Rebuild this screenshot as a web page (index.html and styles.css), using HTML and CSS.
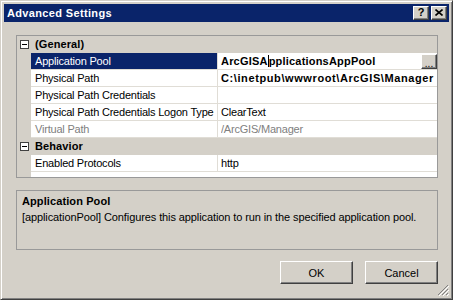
FILE: index.html
```html
<!DOCTYPE html>
<html lang="en">
<head>
  <meta charset="UTF-8" />
  <title>Advanced Settings</title>
  <link rel="stylesheet" href="styles.css">
</head>
<body>
  <div class="window">
    <div class="titlebar">
      <span class="title">Advanced Settings</span>
      <div class="caption-btns">
        <span class="cbtn">?</span>
        <span class="cbtn">
          <svg width="8" height="7" viewBox="0 0 8 7"><path d="M0.5 0.5 L7.5 6.5 M7.5 0.5 L0.5 6.5" stroke="#000" stroke-width="1.6"/></svg>
        </span>
      </div>
    </div>

    <div class="content">
      <!-- property grid -->
      <div class="grid">
        <div class="row cat">
          <span class="margin"><i class="toggle"></i></span>
          <span class="cat-name">(General)</span>
        </div>
        <div class="row selected">
          <span class="margin"></span>
          <span class="name">Application Pool</span>
          <span class="value strong">
            <span class="value-text">ArcGISA<i class="caret"></i>pplicationsAppPool</span>
            <span class="ellipsis">...</span>
          </span>
        </div>
        <div class="row">
          <span class="margin"></span>
          <span class="name">Physical Path</span>
          <span class="value strong"><span class="value-text path">C:\inetpub\wwwroot\ArcGIS\Manager</span></span>
        </div>
        <div class="row">
          <span class="margin"></span>
          <span class="name">Physical Path Credentials</span>
          <span class="value"><span class="value-text"></span></span>
        </div>
        <div class="row">
          <span class="margin"></span>
          <span class="name">Physical Path Credentials Logon Type</span>
          <span class="value"><span class="value-text">ClearText</span></span>
        </div>
        <div class="row readonly">
          <span class="margin"></span>
          <span class="name">Virtual Path</span>
          <span class="value"><span class="value-text">/ArcGIS/Manager</span></span>
        </div>
        <div class="row cat">
          <span class="margin"><i class="toggle"></i></span>
          <span class="cat-name">Behavior</span>
        </div>
        <div class="row">
          <span class="margin"></span>
          <span class="name">Enabled Protocols</span>
          <span class="value"><span class="value-text">http</span></span>
        </div>
      </div>

      <!-- description panel -->
      <div class="desc">
        <div class="desc-title">Application Pool</div>
        <div class="desc-text">[applicationPool] Configures this application to run in the specified application pool.</div>
      </div>

      <div class="buttons">
        <button class="btn">OK</button>
        <button class="btn">Cancel</button>
      </div>
    </div>

    <svg class="grip" width="12" height="12" viewBox="0 0 12 12">
      <path d="M11 1 L1 11 M11 5 L5 11 M11 9 L9 11" stroke="#808080" stroke-width="1"/>
      <path d="M12 2 L2 12 M12 6 L6 12 M12 10 L10 12" stroke="#fff" stroke-width="1"/>
    </svg>
  </div>
</body>
</html>
```

FILE: styles.css
```css
* {
  box-sizing: border-box;
}

body {
  margin: 0;
  background-color: #d4d0c8;
  font-family: "Liberation Sans", Arial, sans-serif;
  font-size: 11px;
  color: #000;
}

.window {
  position: relative;
  width: 453px;
  height: 300px;
  display: flex;
  flex-direction: column;
  padding: 3px;
  border: 1px solid;
  border-color: #d4d0c8 #404040 #404040 #d4d0c8;
  box-shadow: inset 1px 1px #fff, inset -1px -1px #808080;
  background-color: #d4d0c8;
}

.titlebar {
  height: 18px;
  display: flex;
  align-items: center;
  padding-left: 3px;
  background-color: #0a246a;
  color: #fff;
}

.title {
  font-weight: bold;
  letter-spacing: 0.35px;
}

.caption-btns {
  margin-left: auto;
  display: flex;
  gap: 2px;
  padding-right: 2px;
}

.cbtn {
  width: 16px;
  height: 14px;
  display: flex;
  align-items: center;
  justify-content: center;
  background-color: #d4d0c8;
  border: 1px solid;
  border-color: #fff #404040 #404040 #fff;
  box-shadow: inset -1px -1px #808080;
  color: #000;
  font-weight: bold;
  font-size: 11px;
  line-height: 1;
  padding-bottom: 1px;
}

.content {
  flex: 1;
  display: flex;
  flex-direction: column;
  padding: 13px 11px 0 12px;
}

/* property grid */
.grid {
  height: 143px;
  display: flex;
  flex-direction: column;
  border: 1px solid #999;
  background: linear-gradient(to right, #d4d0c8 14px, #fff 14px);
  overflow: hidden;
  letter-spacing: -0.2px;
}

.row {
  display: flex;
  height: 17px;
  line-height: 16px;
  white-space: nowrap;
}

.margin {
  flex: none;
  width: 14px;
  display: flex;
  align-items: center;
  padding-left: 3px;
}

.toggle {
  width: 9px;
  height: 9px;
  border: 1px solid #404040;
  background-color: #fff;
  position: relative;
}

.toggle::after {
  content: "";
  position: absolute;
  left: 1px;
  top: 3px;
  width: 5px;
  height: 1px;
  background-color: #000;
}

.name {
  flex: none;
  width: 187px;
  padding-left: 4px;
  border-right: 1px solid #e0ddd6;
  border-bottom: 1px solid #e0ddd6;
  overflow: hidden;
}

.value {
  flex: 1;
  min-width: 0;
  display: flex;
  padding-left: 3px;
  border-bottom: 1px solid #e0ddd6;
}

.value-text {
  flex: 1;
  overflow: hidden;
}

.strong {
  font-weight: bold;
  letter-spacing: 0.2px;
}

.path {
  letter-spacing: 0.6px;
}

.cat {
  background-color: #d4d0c8;
}

.cat-name {
  padding-left: 4px;
  font-weight: bold;
  letter-spacing: 0.1px;
}

.selected .name {
  background-color: #0a246a;
  color: #fff;
}

.readonly .name,
.readonly .value {
  color: #808080;
}

.caret {
  display: inline-block;
  width: 1px;
  height: 12px;
  background-color: #000;
  vertical-align: -2px;
}

.ellipsis {
  flex: none;
  width: 16px;
  height: 15px;
  margin-top: 1px;
  display: flex;
  align-items: flex-end;
  justify-content: center;
  background-color: #d4d0c8;
  border: 1px solid;
  border-color: #fff #404040 #404040 #fff;
  box-shadow: inset -1px -1px #808080;
  font-size: 10px;
  font-weight: normal;
  line-height: 9px;
  letter-spacing: 0;
}

/* description */
.desc {
  margin-top: 12px;
  height: 60px;
  padding: 2px 5px;
  border: 1px solid #999;
  line-height: 16px;
  letter-spacing: -0.1px;
}

.desc-title {
  font-weight: bold;
  letter-spacing: 0.1px;
}

.buttons {
  margin-top: 11px;
  display: flex;
  justify-content: flex-end;
  gap: 12px;
}

.btn {
  width: 73px;
  height: 23px;
  padding: 0;
  background-color: #d4d0c8;
  border: 1px solid;
  border-color: #fff #404040 #404040 #fff;
  box-shadow: inset -1px -1px #808080;
  font-family: "Liberation Sans", Arial, sans-serif;
  font-size: 11px;
  color: #000;
}

.grip {
  position: absolute;
  right: 3px;
  bottom: 3px;
}
```
